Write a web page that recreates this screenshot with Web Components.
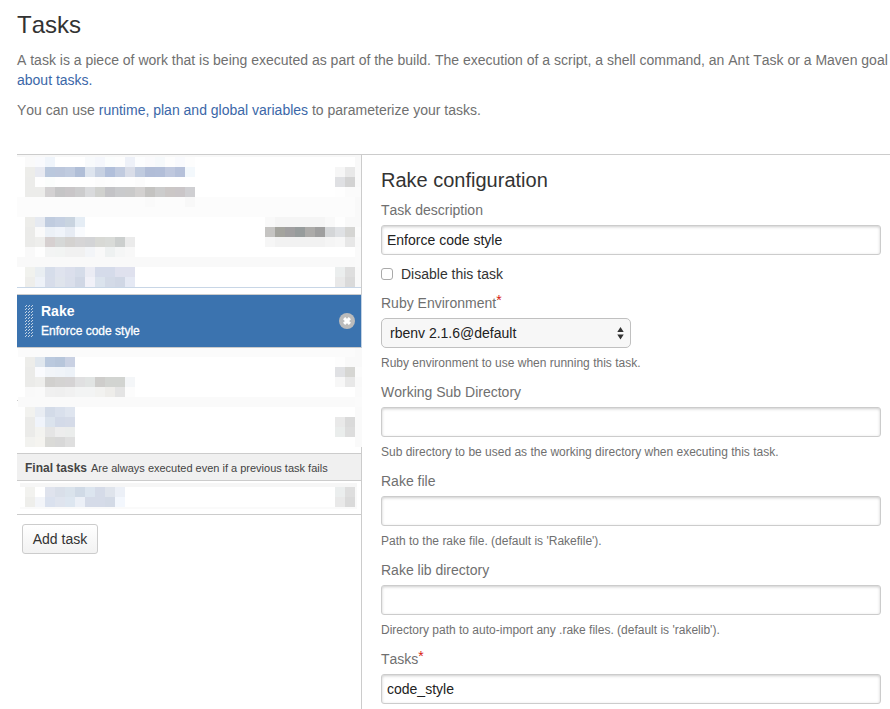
<!DOCTYPE html>
<html lang="en">
<head>
<meta charset="utf-8">
<title>Tasks</title>
<style>
html, body { margin: 0; background: #fff; overflow: hidden; }
body { height: 709px; font: 14px/20px "Liberation Sans", Arial, sans-serif; font-kerning: none; color: #707070; }
a { color: #3b67a8; text-decoration: none; }
</style>
</head>
<body>
<tasks-page>
  <page-intro slot="intro" heading="Tasks">
    <span slot="first">A task is a piece of work that is being executed as part of the build. The execution of a script, a shell command, an Ant Task or a Maven goal<br><a href="#">about tasks.</a></span>
    <span slot="second">You can use <a href="#">runtime, plan and global variables</a> to parameterize your tasks.</span>
  </page-intro>
  <task-list slot="list"></task-list>
  <task-config slot="config" heading="Rake configuration">
    <form-field label="Task description"><text-input value="Enforce code style"></text-input></form-field>
    <check-option>Disable this task</check-option>
    <form-field label="Ruby Environment" required help="Ruby environment to use when running this task."><select-box>rbenv 2.1.6@default</select-box></form-field>
    <form-field label="Working Sub Directory" help="Sub directory to be used as the working directory when executing this task."><text-input></text-input></form-field>
    <form-field label="Rake file" help="Path to the rake file. (default is 'Rakefile')."><text-input></text-input></form-field>
    <form-field label="Rake lib directory" help="Directory path to auto-import any .rake files. (default is 'rakelib')."><text-input></text-input></form-field>
    <form-field label="Tasks" required><text-input value="code_style"></text-input></form-field>
  </task-config>
</tasks-page>
<script>
function define(name, html, setup) {
  customElements.define(name, class extends HTMLElement {
    constructor() {
      super();
      this.attachShadow({ mode: 'open' }).innerHTML = '<style>:host,*{box-sizing:border-box}</style>' + html;
    }
    connectedCallback() { if (setup) setup(this, this.shadowRoot); }
  });
}

define('tasks-page', `
<style>
:host { display: block; width: 890px; height: 709px; overflow: hidden; padding-left: 17px; }
.cols { display: grid; grid-template-columns: 345px 1fr; border-top: 1px solid #ccc; height: 555px; overflow: hidden; }
</style>
<slot name="intro"></slot>
<div class="cols"><slot name="list"></slot><slot name="config"></slot></div>`);

define('page-intro', `
<style>
:host { display: block; height: 154px; padding-top: 10px; white-space: nowrap; }
h1 { margin: 0 0 10px; font-size: 24px; font-weight: 400; line-height: 30px; color: #333; }
p { margin: 0 0 10px; }
</style>
<h1></h1><p><slot name="first"></slot></p><p><slot name="second"></slot></p>`,
(el, r) => { r.querySelector('h1').textContent = el.getAttribute('heading'); });

/* Redacted rows: "height | base | left cells | right cells | edge" per row. */
const BLOCKS = {
  a: `2|f8f8f8|||f8f8f8
10|fff|fafafa f9fafd f0f5fb fff fff fff f8fafc f5f7fc fbfdfd fdfdfd eef1f8 fcfdfe fafafc f6f9fb fdfdfd f9fafd fdfdfd||f9f9f9
10|fff|ededea e8eaf1 bac8dd bcc7dc c0cbdf b0bed7 dde4ee c7d1e2 b1bfda c1cbdf d9dde8 c0cbdf b1bdd7 b2bed8 bfc8de b6c1da f3f8fc|f6f6f6 e8e8e8|f9f9f9
10|fff|ececea fefefe fbfdfc fefefe fefefe fefefe fefefe fcfcfc fdfdfd fefefe fefefe fcfcfc|dfe0e3 d3d3d3|f9f9f9
10|fff|ececea ececea d3d1d2 c5c5c6 c9c6c8 cccccd d9dadc d0d1ce c3c3c6 c9cacc cacaca d3d1d0 c4c3c1 cccccc cbc7c6 cac6c8 cfcfd2|fefefe fbfbfb|fbfbfb
10|fcfcfc|fcfcfc fcfcfc fcfcfc fcfcfc fcfcfc fcfcfc fcfcfc fcfcfc fcfcfc fcfcfc fcfcfc fcfcfc fafafa fcfcfc fcfcfc fcfcfc f8f8f8||f9f9f9
10|fcfcfc|||f9f9f9
10|fff|ededea e6eaf1 c0ccdf c5d0e2 c9d4e0 e5edf5|f9f9f9 f5f5f5 f5f5f5 f5f5f5 f5f5f5 f5f5f5 f9f9f9 fefefe f9f9f9|f9f9f9
10|fff|ebebe9 fafafa ecf1f7 f0f4fa e7ecf4 f9fbfe|c5c4c2 a4a49e a09fa0 979c9c acaba9 9f9f9f d4d6d8 dfe1e4 d5d5d3|fbfbfb
10|fff|ebebe9 eeeeec d6d0d0 d6d8d7 d4d2d0 d6d5d6 d3d4d6 d8d9d5 d9dbd8 cccfce ebebeb|f6f6f6 f2f2f2 f2f2f2 f2f2f2 f2f2f2 f2f2f2 f5f5f5 f7f7f7 e7e7e7|f9f9f9
10|fff|f9f9f9 fefefe f3f4f4 f2f4f3 f1f1f1 f1f1f1 f3f5f8 f9f9f9 eef1f1 f5f6f6 f8f8f8||fafafa
10|f9f9f9|||fafafa
10|fff|f1f2ee e9eef2 d6ddea dfe3ee dbdfec d5dce9 ebecf4 d5dbea d5dbea dfe1ee dfe1ee|ebeeee dedede|f9f9f9
10|fff|eeeeeb eef2f8 d7ddea dfe4ec dadfeb d0d7e5 f1f1f8 dbe3ed d3dae7 d0d7e5 e5e9f4|e9e9e9 dadada|f9f9f9`,
  b: `9|fbfbfb|||f9f9f9
10|fff|ededea e0e7ee bac9de b7c6db c9d1e3|fdfdfd f9f9f9|f9f9f9
10|fff|ebebe9 fafbfe f2f5f9 f0f4f9 edf2f8|e0e1e4 d6d6d3|fbfbfb
10|fff|ebebe9 eeeeec d1d0ce d4d3d2 d5d3d4 e0e0e1 e1e4e3 cecdcb d2d4d1 d2d4d1 f4f6f8|f7f7f7 e8e8e8|f9f9f9
10|fff|f9f9f9 fafafa f0f0f0 efefef f1f1f1 f3f4f4 f3f4f4 f2f2f0 eeedea e4e4e4 fcfcfc||fafafa
10|fafafa|||fbfbfb
10|fff|f2f2ef e9edf3 d3dbe8 d9e0ec dfe5ef||fafafa
10|fff|ebebe9 f0f4fb dbe3ed d3dae8 d5dbe8|e9e9e9 dadada|fafafa
10|fff|ebebe9 f3f3f0 e5e5e5 ededed ebedec|eaedec dddddd|fafafa
10|fff|f2f2ef f5f4f0 dadad7 d8d8d8 dfdfdf||fafafa`,
  c: `4|f6f6f6|||f6f6f6
10|fff|f2f2ef fff dfe3ed d9dfe9 dae3ec d0dae6 dce5ef d5dbe8 dfe4ec ecf0f7|ebeeee dedede|f9f9f9
10|fff|eeeeeb f3f5f9 dae1ee dfe4ee dde6f0 ecf0f7 d5dbe8 d5dbe8 d3dae6 f3f7fd|e9e9e9 dadada|f9f9f9
2|fafafa|||fafafa`
};
define('redacted-rows', `
<style>
:host { display: block; }
.row { display: flex; padding-left: var(--lead, 8px); }
i { display: block; flex: none; width: 10px; }
i.gap { flex: 1; }
i.edge { width: var(--edge, 6px); }
</style>
<div id="rows"></div>`,
(el, r) => {
  const cells = s => s.split(' ').filter(Boolean).map(c => `<i style="background:#${c}"></i>`).join('');
  r.getElementById('rows').innerHTML = BLOCKS[el.getAttribute('block')].split('\n').map(line => {
    const [h, base, left, right, edge] = line.split('|');
    return `<div class="row" style="height:${h}px;background:#${base}">${cells(left)}<i class="gap"></i>${cells(right)}<i class="edge" style="background:#${edge}"></i></div>`;
  }).join('');
});

define('active-task', `
<style>
:host { display: flex; flex: none; align-items: center; height: 54px; border-top: 1px solid #ccc; border-bottom: 1px solid #ccc; border-right: 1px solid #c3d2e3; background: #3b73af; color: #fff; padding: 0 6px 0 8px; }
svg { display: block; flex: none; }
.text { flex: 1; margin-left: 8px; }
b { display: block; line-height: 20px; }
small { display: block; font-size: 12px; line-height: 20px; -webkit-text-stroke: .3px #fff; }
</style>
<svg width="8" height="33" shape-rendering="crispEdges"><defs><pattern id="g" width="3" height="3" patternUnits="userSpaceOnUse"><path fill="#c3d3e3" d="M1 0h1v1H1zM0 1h1v1H0z"/></pattern></defs><rect width="8" height="33" fill="url(#g)"/></svg>
<div class="text"><b><slot name="name"></slot></b><small><slot name="note"></slot></small></div>
<svg width="16" height="16" viewBox="0 0 16 16"><circle cx="8" cy="8" r="8" fill="#bbb"/><path d="M5.1 5.1l5.8 5.8M10.9 5.1l-5.8 5.8" stroke="#fff" stroke-width="3"/></svg>`);

define('push-button', `
<style>
:host { display: block; }
button { display: block; height: 30px; width: 76px; padding: 0; border: 1px solid #ccc; border-radius: 3px; background: linear-gradient(#fff, #f2f2f2); font: 14px/20px "Liberation Sans", Arial, sans-serif; font-kerning: none; color: #333; }
</style>
<button><slot></slot></button>`);

define('task-list', `
<style>
:host { display: flex; flex-direction: column; min-height: 554px; }
:host > * { flex: none; }
.before { border-right: 1px solid #ccc; padding-bottom: 6px; }
.before redacted-rows { border-bottom: 1px solid #c8d6e6; }
.after { display: grid; grid-template-columns: 1px 1fr; }
.after redacted-rows { --lead: 7px; --edge: 7px; }
.tick { background: linear-gradient(#ccc, #ccc) 0 52px / 1px 1px no-repeat; }
.spacer { height: 6px; border-right: 1px solid #ccc; }
.final-head { height: 28px; border: solid #ccc; border-width: 1px 1px 1px 0; background: #f0f0f0; padding: 4px 0 0 8px; font-size: 11px; line-height: 20px; color: #444; white-space: nowrap; }
.final-head b { font-size: 12px; margin-right: 4px; }
.final { border: solid #ccc; border-width: 0 1px 1px 0; height: 34px; padding: 2px 4px 0 3px; }
.final redacted-rows { --lead: 5px; --edge: 2px; }
.foot { flex: 1; border-right: 1px solid #ccc; padding: 9px 0 0 5px; }
</style>
<div class="before"><redacted-rows block="a"></redacted-rows></div>
<active-task><span slot="name">Rake</span><span slot="note">Enforce code style</span></active-task>
<div class="after"><span class="tick"></span><redacted-rows block="b"></redacted-rows></div>
<div class="spacer"></div>
<div class="final-head"><b>Final tasks</b><span>Are always executed even if a previous task fails</span></div>
<div class="final"><redacted-rows block="c"></redacted-rows></div>
<div class="foot"><push-button>Add task</push-button></div>`);

define('task-config', `
<style>
:host { display: flex; flex-direction: column; gap: 9px; padding: 13px 9px 0 19px; }
h2 { margin: 0 0 -1px; font-size: 20px; font-weight: 400; line-height: 24px; color: #333; }
</style>
<h2></h2><slot></slot>`,
(el, r) => { r.querySelector('h2').textContent = el.getAttribute('heading'); });

define('form-field', `
<style>
:host { display: flex; flex-direction: column; gap: 5px; }
.label { height: 20px; }
.label em { display: none; font-style: normal; font-size: 14px; line-height: 10px; color: #d82010; vertical-align: 3px; }
:host([required]) em { display: inline; }
.help { font-size: 12px; line-height: 20px; }
</style>
<div class="label"><span></span><em>*</em></div><slot></slot><div class="help"></div>`,
(el, r) => {
  r.querySelector('span').textContent = el.getAttribute('label');
  const help = r.querySelector('.help');
  if (el.hasAttribute('help')) help.textContent = el.getAttribute('help'); else help.remove();
});

define('text-input', `
<style>
:host { display: block; }
input { display: block; width: 500px; height: 30px; margin: 0; padding: 0 5px; border: 1px solid #ccc; border-radius: 3px; background: #fff; box-shadow: inset 0 1px 3px #ccc; font: 14px/20px "Liberation Sans", Arial, sans-serif; font-kerning: none; color: #222; outline: 0; }
</style>
<input type="text">`,
(el, r) => { r.querySelector('input').value = el.getAttribute('value') || ''; });

define('check-option', `
<style>
:host { display: flex; align-items: center; gap: 8px; height: 20px; color: #333; }
i { width: 12px; height: 12px; border: 1px solid #aaa; border-radius: 3px; background: #fff; }
</style>
<i></i><span><slot></slot></span>`);

define('select-box', `
<style>
:host { display: flex; align-items: center; justify-content: space-between; width: 250px; height: 30px; padding: 0 6px 0 8px; border: 1px solid #c0c0c0; border-radius: 5px; background: #f7f7f7; color: #222; }
svg { display: block; }
</style>
<span><slot></slot></span>
<svg width="7" height="13" viewBox="0 0 7 13"><path fill="#333" d="M3.5 0L6.7 5H.3zM3.5 12.5L.3 7.5h6.4z"/></svg>`);
</script>
</body>
</html>
